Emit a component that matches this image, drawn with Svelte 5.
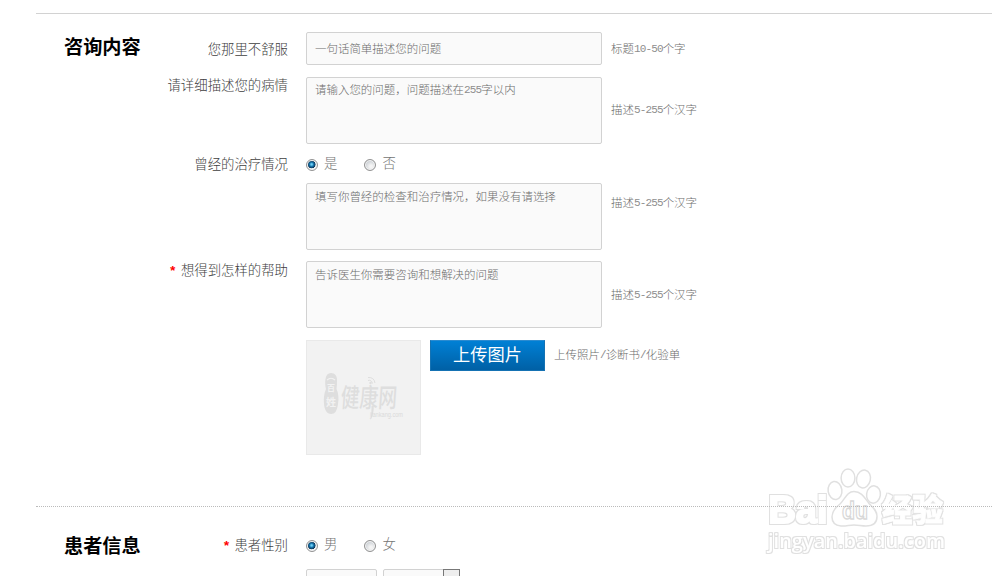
<script>
  const placeholder = {
    title: ['一句话简单描述您的问题'],
    detail: ['请输入您的问题，问题描述在', '255', '字以内'],
    history: ['填写你曾经的检查和治疗情况，如果没有请选择'],
    help: ['告诉医生你需要咨询和想解决的问题']
  };
  const titleHint = ['标题', '10-50', '个字'];
  const hint = ['描述', '5-255', '个汉字'];
  let treated = $state('是');
  let gender = $state('男');
</script>

{#snippet mixed(parts)}{#each parts as part}{#if /^[\d-]+$/.test(part)}<span class="num">{part}</span>{:else}{part}{/if}{/each}{/snippet}

{#snippet radio(label, checked, choose)}
  <button class="radio" type="button" role="radio" aria-checked={checked} onclick={choose}>
    <span class="dot" class:checked></span><span class="radio-text">{label}</span>
  </button>
{/snippet}

<main>
  <section class="consult">
    <h2>咨询内容</h2>
    <div class="rows">
      <div class="row title-row">
        <div class="label">您那里不舒服</div>
        <div class="box single">{@render mixed(placeholder.title)}</div>
        <div class="hint">{@render mixed(titleHint)}</div>
      </div>
      <div class="row area-row">
        <div class="label">请详细描述您的病情</div>
        <div class="box area">{@render mixed(placeholder.detail)}</div>
        <div class="hint">{@render mixed(hint)}</div>
      </div>
      <div class="row radio-row">
        <div class="label">曾经的治疗情况</div>
        <div class="radios" role="radiogroup">
          {@render radio('是', treated === '是', () => (treated = '是'))}
          {@render radio('否', treated === '否', () => (treated = '否'))}
        </div>
      </div>
      <div class="row area-row upper">
        <div class="label"></div>
        <div class="box area">{@render mixed(placeholder.history)}</div>
        <div class="hint">{@render mixed(hint)}</div>
      </div>
      <div class="row area-row help-row">
        <div class="label"><span class="req">*</span>想得到怎样的帮助</div>
        <div class="box area">{@render mixed(placeholder.help)}</div>
        <div class="hint">{@render mixed(hint)}</div>
      </div>
      <div class="row upload-row">
        <div class="label"></div>
        <div class="preview">
          <svg viewBox="0 0 115 115" width="115" height="115">
            <g fill="#dedede">
              <path d="M25 33c4 0 6 3 6 7 0 3 0 6-.5 9 2 4 2.500 10 1.500 15-1 7-3 10-7 10s-6.500-4-7-10c-.5-6 0-10 2-15-1-4-1-7-.5-10 .5-4 2.500-6 5.500-6z" />
              <path d="M65.500 66h2.300c0 6-1 10-3.200 14 .8-5 .9-9 .9-14z" />
              <circle cx="64.500" cy="43" r="1.200" />
            </g>
            <path d="M62 40.500q3.500-1 4.500 3M62 37.500q6-.5 7 5.500" fill="none" stroke="#dedede" stroke-width="1" />
            <path d="M21 40q4-3.500 8 0" fill="none" stroke="#f2f2f2" stroke-width="1.200" />
            <g fill="#f2f2f2" font-weight="bold">
              <text x="21" y="51" font-size="8">百</text>
              <text x="20" y="66" font-size="10">姓</text>
            </g>
            <text x="34" y="67" font-size="26" fill="#dedede" font-weight="500" textLength="56" lengthAdjust="spacingAndGlyphs" transform="translate(5 0) skewX(-4)">健康网</text>
            <text x="64" y="77" class="domain" font-size="6.500" fill="#dadada" textLength="33" lengthAdjust="spacingAndGlyphs">jiankang.com</text>
          </svg>
        </div>
        <button class="upload" type="button">上传图片</button>
        <div class="hint">上传照片<span class="num">/</span>诊断书<span class="num">/</span>化验单</div>
      </div>
    </div>
  </section>

  <section class="patient">
    <h2>患者信息</h2>
    <div class="rows">
      <div class="row radio-row">
        <div class="label"><span class="req">*</span>患者性别</div>
        <div class="radios" role="radiogroup">
          {@render radio('男', gender === '男', () => (gender = '男'))}
          {@render radio('女', gender === '女', () => (gender = '女'))}
        </div>
      </div>
      <div class="row age-row">
        <div class="label"></div>
        <div class="box age"></div>
        <div class="box unit"><span class="arrow"></span></div>
      </div>
    </div>
  </section>

  <svg class="watermark" viewBox="0 0 200 113" width="200" height="113">
    <defs>
      <filter id="outline" x="-5%" y="-10%" width="110%" height="120%">
        <feMorphology in="SourceAlpha" operator="dilate" radius="1" result="wide" />
        <feFlood flood-color="#e0e0e0" />
        <feComposite in2="wide" operator="in" result="edge" />
        <feMerge>
          <feMergeNode in="edge" />
          <feMergeNode in="SourceGraphic" />
        </feMerge>
      </filter>
    </defs>
    <g fill="#fff" filter="url(#outline)">
      <text class="latin" x="8.500" y="60" font-size="39" textLength="59" lengthAdjust="spacingAndGlyphs" stroke="#fff" stroke-width="2">Bai</text>
      <text x="122" y="58" font-size="31" font-weight="900" textLength="61" lengthAdjust="spacingAndGlyphs" stroke="#fff" stroke-width=".8">经验</text>
      <text class="site" x="8" y="85" font-size="20.500" textLength="177" lengthAdjust="spacingAndGlyphs">jingyan.baidu.com</text>
    </g>
    <g fill="#fff" stroke="#e0e0e0" stroke-width="1.500">
      <ellipse cx="75" cy="27.500" rx="6.900" ry="9" transform="rotate(-8 75 27.500)" />
      <ellipse cx="88" cy="15" rx="6.900" ry="9" />
      <ellipse cx="103.500" cy="16" rx="6.900" ry="9" transform="rotate(12 103.500 16)" />
      <ellipse cx="113.500" cy="31.500" rx="6.900" ry="8.700" transform="rotate(8 113.500 31.500)" />
      <path d="M94 28.500c8 0 11 7 15 12 4 4 8 7 8 13 0 7-5 9.500-11 9.500-5 0-7-1-12-1s-8 1.500-13 1c-6-.5-9-4-9-9 0-6 4-10 8-13 5-5 7-12.500 14-12.500z" />
      <text class="latin" x="82" y="56" font-size="24" textLength="26" lengthAdjust="spacingAndGlyphs" stroke="#d8d8d8" stroke-width="1.300">du</text>
    </g>
  </svg>
</main>

<style>
  :global(body) {
    background: #fff;
    overflow: hidden;
  }
  main {
    position: relative;
    isolation: isolate;
    box-sizing: border-box;
    width: 1000px;
    height: 576px;
    padding: 13px 8px 0 36px;
    overflow: hidden;
    font-family: 'Noto Sans CJK SC', sans-serif;
    font-weight: 300;
    color: #404040;
  }
  section {
    display: flex;
    box-sizing: border-box;
  }
  .consult {
    height: 493px;
    border-top: 1px solid #d2d2d2;
    padding-top: 18px;
  }
  .patient {
    border-top: 1px dotted #bbb;
    padding-top: 28px;
  }
  h2 {
    flex: none;
    box-sizing: border-box;
    width: 106px;
    margin: 0;
    padding-left: 28px;
    font-size: 19.200px;
    line-height: 28px;
    font-weight: 700;
    color: #000;
    white-space: nowrap;
  }
  .patient h2 {
    margin-top: -4px;
  }
  .row {
    display: flex;
    align-items: flex-start;
  }
  .label {
    flex: none;
    width: 146px;
    margin: -1px 18px 0 0;
    font-size: 13.400px;
    line-height: 18px;
    text-align: right;
    white-space: nowrap;
  }
  .title-row .label {
    line-height: 34px;
  }
  .area-row .label {
    line-height: 17px;
  }
  .help-row .label {
    line-height: 19px;
  }
  .req {
    color: #f00;
    margin-right: 4px;
    font-family: 'Liberation Mono', monospace;
    font-weight: 700;
  }
  .box {
    box-sizing: border-box;
    width: 296px;
    border: 1px solid #d2d2d2;
    border-radius: 2px;
    background: #fafafa;
    padding: 0 8px;
    font-size: 11.480px;
    color: #6c6c6c;
    white-space: nowrap;
  }
  .single {
    height: 33px;
    line-height: 31px;
    margin-bottom: 12px;
  }
  .area {
    height: 67px;
    line-height: 18px;
    padding-top: 3px;
  }
  .title-row + .area-row .area {
    line-height: 16px;
  }
  .hint {
    margin-left: 9px;
    font-size: 11.480px;
    line-height: 32px;
    color: #6c6c6c;
    white-space: nowrap;
  }
  .area-row .hint {
    line-height: 65px;
  }
  .help-row .hint {
    line-height: 67px;
  }
  .upper .hint {
    line-height: 38px;
  }
  .num {
    position: relative;
    top: -1px;
    font-family: 'Liberation Mono', monospace;
    font-size: 11px;
    font-weight: 400;
    letter-spacing: -0.860px;
    line-height: 1;
    color: #8e8e8e;
  }
  .radio-row {
    height: 39px;
    padding-top: 11px;
    box-sizing: border-box;
  }
  .area-row:not(.upper) + .upload-row {
    margin-top: 12px;
  }
  .upper {
    margin-bottom: 11px;
  }
  .patient .radio-row {
    height: 34px;
    padding-top: 1px;
  }
  .radios {
    display: flex;
    gap: 26px;
  }
  .radio {
    display: flex;
    align-items: center;
    gap: 6px;
    height: 18px;
    padding: 0;
    border: 0;
    background: none;
    font: inherit;
    font-size: 13.400px;
    line-height: 18px;
    color: #747474;
  }
  .radio + .radio {
    margin-left: 1px;
  }
  .radio-text {
    margin-top: -4px;
  }
  .dot {
    box-sizing: border-box;
    width: 12px;
    height: 12px;
    margin-top: 1px;
    border: 1px solid #929292;
    border-radius: 50%;
    background: radial-gradient(circle at 60% 65%, #f4f4f4 15%, #c9ced3 70%);
    box-shadow: inset 0 0 0 1px #f5f5f5;
  }
  .dot.checked {
    background: radial-gradient(circle at 46% 44%, #6fd0f5 0 8%, #1676ae 26%, #0b3557 47%, #e9eef2 54%);
  }
  .preview {
    box-sizing: border-box;
    flex: none;
    width: 115px;
    height: 115px;
    border: 1px solid #e9e9e9;
    background: #f2f2f2;
  }
  .preview svg {
    display: block;
    margin: -1px;
  }
  .domain {
    font-family: 'Liberation Sans', sans-serif;
    font-weight: 400;
  }
  .upload {
    width: 115px;
    height: 31px;
    margin-left: 9px;
    padding: 0 0 4px;
    border: 1px solid #1572b3;
    border-top-color: #2b8bd0;
    background: linear-gradient(#0080d5, #0060a5);
    color: #fff;
    font: 400 17.200px/25px 'Noto Sans CJK SC', sans-serif;
  }
  .upload-row .hint {
    line-height: 29px;
  }
  .age {
    width: 71px;
    height: 33px;
  }
  .unit {
    display: flex;
    justify-content: flex-end;
    width: 77px;
    height: 33px;
    margin-left: 6px;
    padding: 0;
  }
  .arrow {
    box-sizing: border-box;
    width: 17px;
    height: 32px;
    margin: -1px -1px 0 0;
    border: 1px solid #777;
    background: #eee;
  }
  .watermark {
    position: absolute;
    z-index: -1;
    left: 760px;
    top: 463px;
    font-family: 'Noto Sans CJK SC', sans-serif;
  }
  .latin {
    font-family: 'Liberation Sans', sans-serif;
    font-weight: 700;
  }
  .site {
    font-family: 'Open Sans', sans-serif;
    font-weight: 600;
  }
</style>
